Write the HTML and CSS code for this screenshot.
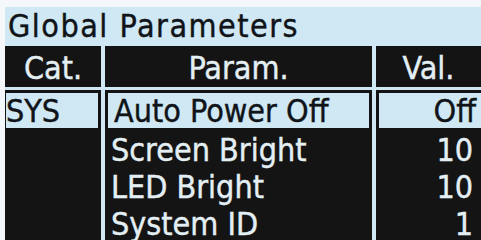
FILE: index.html
```html
<!DOCTYPE html>
<html>
<head>
<meta charset="utf-8">
<link rel="stylesheet" href="styles.css">
</head>
<body>
<div class="screen">
  <div class="title">Global Parameters</div>
  <div class="head">
    <div class="hcell">Cat.</div>
    <div class="hcell">Param.</div>
    <div class="hcell">Val.</div>
  </div>
  <div class="body">
    <div class="col cat">
      <div class="cell sel">SYS</div>
    </div>
    <div class="col param">
      <div class="cell sel">Auto Power Off</div>
      <div class="cell">Screen Bright</div>
      <div class="cell">LED Bright</div>
      <div class="cell">System ID</div>
    </div>
    <div class="col val">
      <div class="cell sel">Off</div>
      <div class="cell">10</div>
      <div class="cell">10</div>
      <div class="cell">1</div>
    </div>
  </div>
</div>
</body>
</html>
```
FILE: styles.css
```css
html, body {
  margin: 0;
  padding: 0;
}
body {
  width: 481px;
  height: 240px;
  overflow: hidden;
  background: #f4f8fa;
  font-family: "DejaVu Sans Condensed", "DejaVu Sans", sans-serif;
  font-stretch: condensed;
  font-size: 32px;
  -webkit-text-stroke: 0.4px currentColor;
}
.screen {
  margin: 7px 0 0 5px;
  width: 476px;
  height: 233px;
  background: #cfe8f4;
  display: flex;
  flex-direction: column;
}
.title {
  height: 39px;
  line-height: 39px;
  padding-left: 3px;
  color: #101418;
  letter-spacing: 1.5px;
}
.head,
.body {
  display: grid;
  grid-template-columns: 96px 267px 105px;
  column-gap: 4px;
}
.hcell {
  height: 41px;
  line-height: 44px;
  background: #141414;
  color: #e4eff4;
  text-align: center;
}
.body {
  margin-top: 3px;
  flex: 1;
}
.col {
  background: #141414;
  display: flex;
  flex-direction: column;
}
.cell {
  height: 37px;
  box-sizing: border-box;
  display: flex;
  align-items: center;
  color: #e4eff4;
  padding: 0 6px;
}
.cell.sel {
  height: 41px;
  background: #cfe8f4;
  color: #101418;
  border: 3px solid #141414;
}
.cat .cell {
  padding-left: 0;
  border-left-width: 1px;
}
.val .cell {
  justify-content: flex-end;
  padding-right: 8px;
}
.val .cell.sel {
  padding-right: 5px;
  border-right-width: 0;
}
```
